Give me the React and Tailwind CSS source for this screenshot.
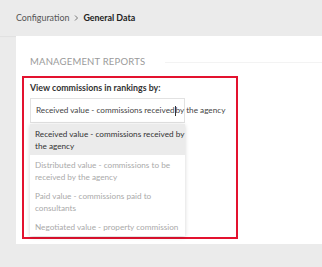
import React from 'react';

const options = [
  ['Received value - commissions received by', 'the agency'],
  ['Distributed value - commissions to be', 'received by the agency'],
  ['Paid value - commissions paid to', 'consultants'],
  ['Negotiated value - property commission'],
];

const App = () => {
  return (
    <div className="w-[322px] h-[267px] bg-[#ebebeb] overflow-hidden font-['Lato',sans-serif]">
      {/* breadcrumb */}
      <div className="h-[36px] flex items-center pl-[16px] text-[8.9px] text-[#555] shadow-[0_1px_1px_rgba(0,0,0,0.04)]">
        <span>Configuration</span>
        <svg width="10" height="10" viewBox="0 0 10 10" className="mx-[2px]">
          <path d="M4 2.5 L6.5 5 L4 7.5" fill="none" stroke="#777" strokeWidth="1" />
        </svg>
        <span className="font-bold text-[#222]">General Data</span>
      </div>

      <div className="ml-[16px] bg-white h-[208px] pt-[18px] pl-[6px]">
        <div className="flex items-center ml-[8px] h-[16px]">
          <span className="text-[9.5px] text-[#9a9a9a] tracking-[0.2px] whitespace-nowrap">MANAGEMENT REPORTS</span>
          <div className="flex-1 ml-[20px] border-t border-[#f3f3f3]" />
        </div>

        <div className="mt-[6px] w-[216px] h-[163px] border-2 border-[#e3122f] pt-[3px] px-[6px]">
          <div className="text-[8.8px] font-bold text-[#333] leading-[14px]">View commissions in rankings by:</div>
          <div className="mt-[3px] w-[155px] h-[25px] border border-[#e2e2e2] flex items-center pl-[5px] text-[8.2px] text-[#444] whitespace-nowrap">
            <span>Received value - commissions received</span>
            <span className="inline-block h-[10px] border-l border-[#333]" />
            <span>by the agency</span>
          </div>
          <div className="mt-[1px] w-[155px] bg-white shadow-[0_1px_4px_rgba(0,0,0,0.18)] text-[8.2px] leading-[12px]">
            {options.map((lines, i) => (
              <div
                key={lines[0]}
                className={i === 0 ? 'px-[5px] py-[3.5px] bg-[#ebebeb] text-[#333] whitespace-nowrap' : 'px-[5px] py-[3.5px] text-[#aaa] whitespace-nowrap'}
              >
                {lines.map((l) => (
                  <div key={l}>{l}</div>
                ))}
              </div>
            ))}
          </div>
        </div>
      </div>
    </div>
  );
};

export default App;
